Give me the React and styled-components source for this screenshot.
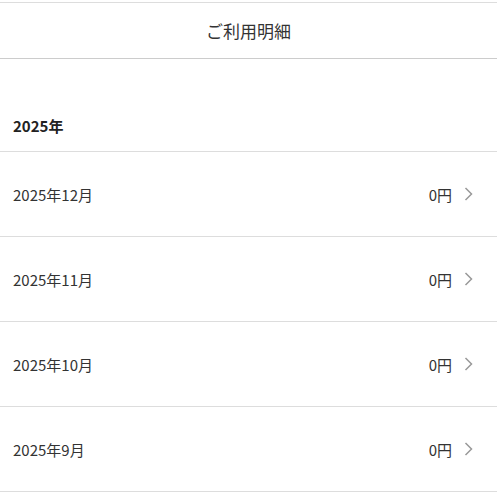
import React from "react";
import styled, { createGlobalStyle } from "styled-components";

const GlobalStyle = createGlobalStyle`
  body {
    margin: 0;
    background: #fff;
    font-family: "Noto Sans CJK JP", "Noto Sans", sans-serif;
    color: #333;
  }
`;

const Page = styled.div`
  width: 497px;
  padding-top: 2px;
`;

const Header = styled.header`
  height: 55px;
  border-top: 1px solid #ddd;
  border-bottom: 1px solid #ccc;
  display: flex;
  align-items: center;
  justify-content: center;
  font-size: 17px;
  color: #333;
`;

const YearTitle = styled.h2`
  margin: 0;
  padding: 57px 13px 15px;
  font-size: 15px;
  line-height: 20px;
  font-weight: 700;
  color: #222;
  border-bottom: 1px solid #ddd;
`;

const Row = styled.div`
  height: 84px;
  display: flex;
  align-items: center;
  padding: 0 24px 0 13px;
  border-bottom: 1px solid #ddd;
  font-size: 15px;
  color: #333;
`;

const Month = styled.span`
  flex: 1;
`;

const Amount = styled.span`
  margin-right: 12px;
`;

const Chevron = () => (
  <svg width="9" height="14" viewBox="0 0 9 14" fill="none">
    <path d="M1.5 1 L7.5 7 L1.5 13" stroke="#999" strokeWidth="1.5" />
  </svg>
);

const months = ["2025年12月", "2025年11月", "2025年10月", "2025年9月"];

export default function App() {
  return (
    <Page>
      <GlobalStyle />
      <Header>ご利用明細</Header>
      <YearTitle>2025年</YearTitle>
      {months.map((m) => (
        <Row key={m}>
          <Month>{m}</Month>
          <Amount>0円</Amount>
          <Chevron />
        </Row>
      ))}
    </Page>
  );
}
